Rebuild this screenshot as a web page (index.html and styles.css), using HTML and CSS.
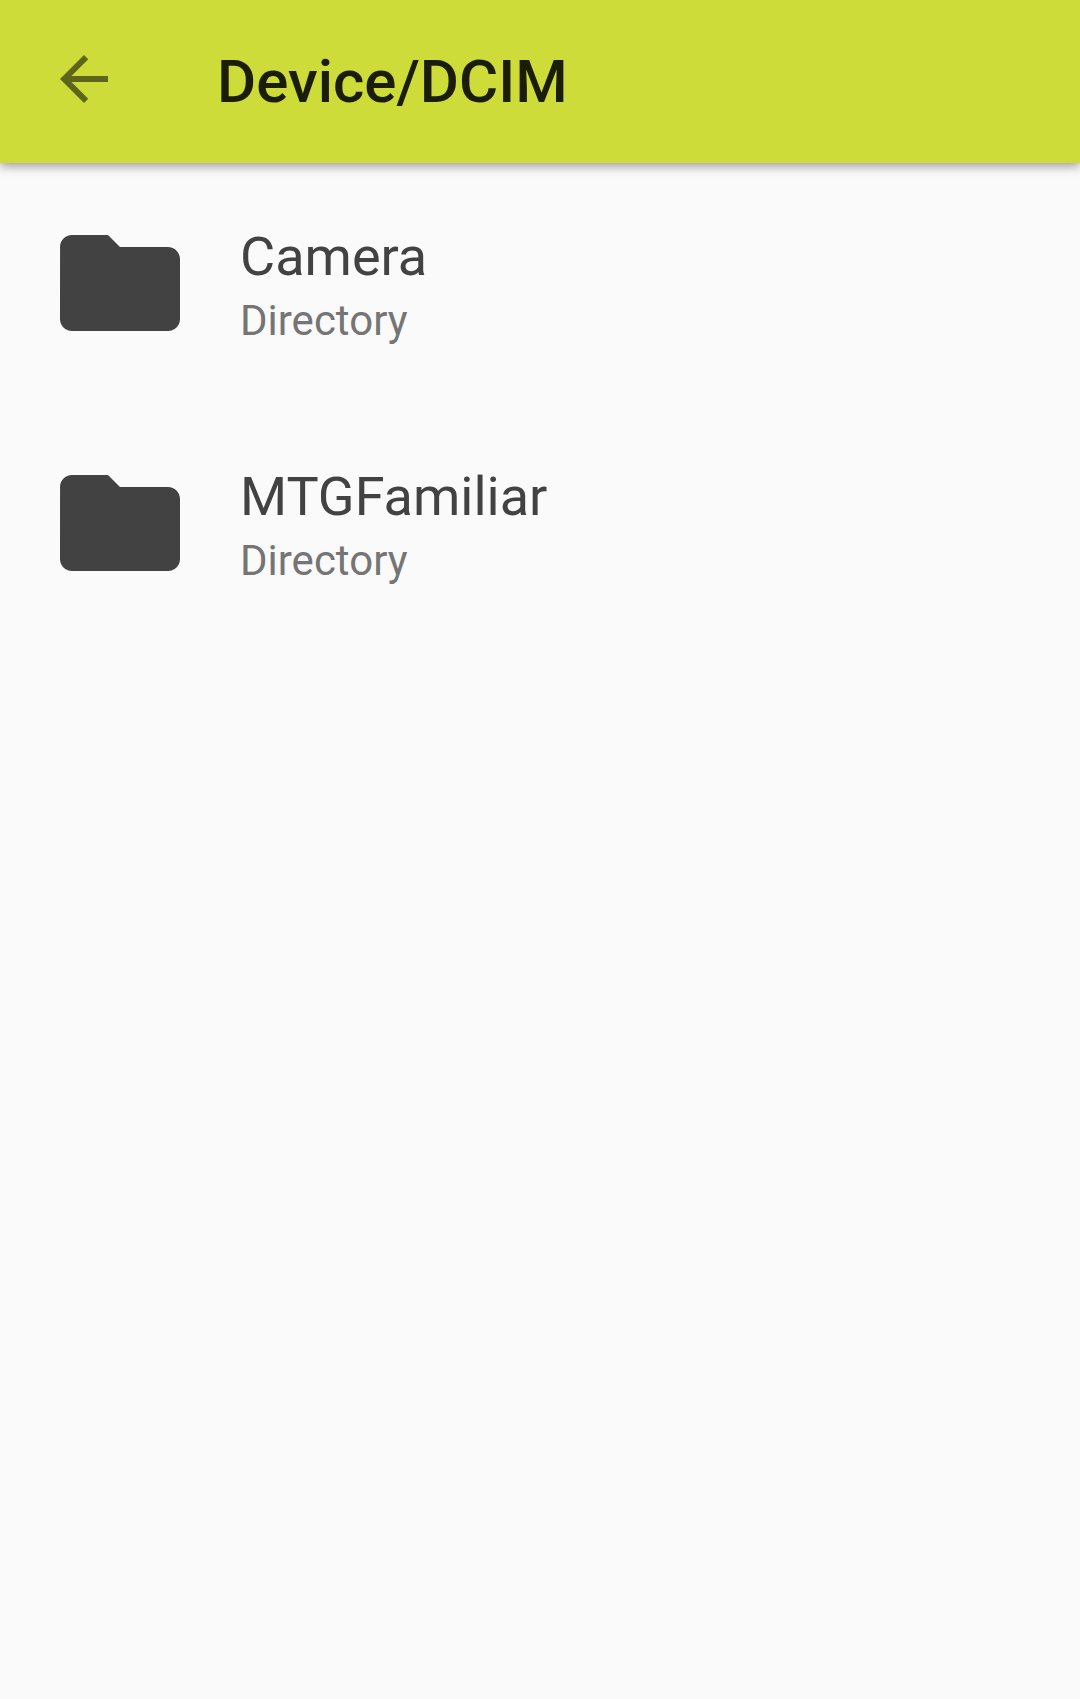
FILE: index.html
```html
<!DOCTYPE html>
<html lang="en">
<head>
<meta charset="utf-8">
<title>Device/DCIM</title>
<link rel="stylesheet" href="styles.css">
</head>
<body>
<header class="toolbar">
  <svg class="back" viewBox="0 0 24 24"><path d="M20 11H7.83l5.59-5.59L12 4l-8 8 8 8 1.41-1.41L7.83 13H20v-2z"/></svg>
  <h1 class="title">Device/DCIM</h1>
</header>
<main class="list">
  <div class="row">
    <svg class="folder" viewBox="0 0 24 24"><path d="M10 4H4c-1.1 0-1.99.9-1.99 2L2 18c0 1.1.9 2 2 2h16c1.1 0 2-.9 2-2V8c0-1.1-.9-2-2-2h-8l-2-2z"/></svg>
    <div class="text"><div class="name">Camera</div><div class="kind">Directory</div></div>
  </div>
  <div class="row">
    <svg class="folder" viewBox="0 0 24 24"><path d="M10 4H4c-1.1 0-1.99.9-1.99 2L2 18c0 1.1.9 2 2 2h16c1.1 0 2-.9 2-2V8c0-1.1-.9-2-2-2h-8l-2-2z"/></svg>
    <div class="text"><div class="name">MTGFamiliar</div><div class="kind">Directory</div></div>
  </div>
</main>
</body>
</html>
```

FILE: styles.css
```css
body {
  margin: 0;
  min-height: 1699px;
  background: #fafafa;
  font-family: Roboto, sans-serif;
}
.toolbar {
  display: flex;
  align-items: center;
  box-sizing: border-box;
  height: 163px;
  padding: 0 48px;
  background: #cddc39;
  box-shadow: 0 3px 10px rgba(0, 0, 0, 0.4);
}
.back {
  width: 72px;
  height: 72px;
  margin: -5px 97px 0 0;
  fill: rgba(0, 0, 0, 0.54);
}
.title {
  margin: 0;
  font-size: 60px;
  line-height: 70px;
  font-weight: 500;
  color: rgba(0, 0, 0, 0.87);
}
.list {
  padding-top: 48px;
}
.row {
  display: flex;
  height: 240px;
  padding-left: 48px;
}
.folder {
  width: 144px;
  height: 144px;
  margin-right: 48px;
  fill: #424242;
}
.text {
  padding-top: 14px;
}
.name {
  font-size: 54px;
  line-height: 64px;
  color: #424242;
}
.kind {
  font-size: 42px;
  line-height: 64px;
  color: #757575;
}
```
